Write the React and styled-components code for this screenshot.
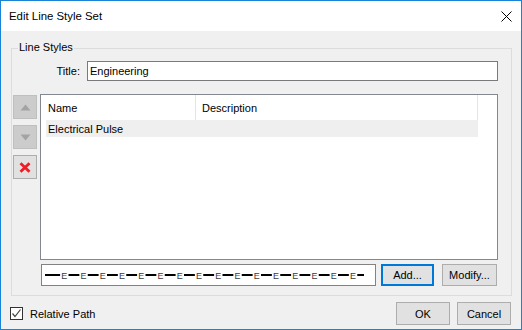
import React from "react";
import styled, { createGlobalStyle, css } from "styled-components";

const Global = createGlobalStyle`
  html, body { margin: 0; padding: 0; background: #ffffff; overflow: hidden; }
  * { box-sizing: border-box; }
  body { font-family: "Liberation Sans", Arial, sans-serif; font-size: 11px; color: #000; }
`;

const Window = styled.div`
  width: 522px;
  height: 330px;
  border: 1px solid #1883d7;
  display: flex;
  flex-direction: column;
  background: #f0f0f0;
`;

const TitleBar = styled.div`
  height: 30px;
  flex: none;
  background: #ffffff;
  display: flex;
  align-items: center;
  justify-content: space-between;
  padding: 0 9px 0 8px;
  font-size: 11.4px;
  color: #000;
`;

const Body = styled.div`
  flex: 1;
  display: flex;
  flex-direction: column;
`;

const Group = styled.div`
  position: relative;
  margin: 17px 9px 0 10px;
  height: 248px;
  border: 1px solid #dcdcdc;
  padding: 12px 13px 9px 1px;
  display: flex;
  flex-direction: column;
`;

const Legend = styled.span`
  position: absolute;
  top: -8px;
  left: 6px;
  padding: 0 1px;
  line-height: 13px;
  background: #f0f0f0;
`;

const TitleRow = styled.div`
  display: flex;
  align-items: center;
  height: 20px;
  gap: 7px;
`;

const Label = styled.label`
  width: 67px;
  text-align: right;
`;

const TextInput = styled.input`
  flex: 1;
  height: 20px;
  border: 1px solid #7a7a7a;
  background: #fff;
  font: inherit;
  padding: 0 2px;
  outline: none;
  color: #000;
`;

const MainRow = styled.div`
  display: flex;
  gap: 3px;
  margin-top: 13px;
  height: 166px;
`;

const SideButtons = styled.div`
  width: 24px;
  padding-top: 1px;
  display: flex;
  flex-direction: column;
  gap: 6px;
`;

const SideButton = styled.div`
  width: 24px;
  height: 24px;
  display: flex;
  align-items: center;
  justify-content: center;
  ${(p) =>
    p.$disabled
      ? css`
          background: #cccccc;
          border: 1px solid #bfbfbf;
        `
      : css`
          background: #e1e1e1;
          border: 1px solid #adadad;
        `}
`;

const List = styled.div`
  flex: 1;
  border: 1px solid #828790;
  background: #fff;
  padding-left: 5px;
`;

const HeaderRow = styled.div`
  display: grid;
  grid-template-columns: 150px 282px;
  height: 25px;
`;

const HeaderCell = styled.div`
  border-right: 1px solid #e5e5e5;
  padding-left: ${(p) => p.$pad}px;
  display: flex;
  align-items: center;
`;

const Row = styled.div`
  width: 432px;
  height: 17px;
  background: #efefef;
  padding-left: 2px;
  display: flex;
  align-items: center;
`;

const BottomRow = styled.div`
  display: flex;
  align-items: center;
  margin-top: 4px;
  height: 22px;
  padding-left: 28px;
`;

const Preview = styled.div`
  width: 335px;
  height: 22px;
  border: 1px solid #828282;
  background: #fff;
  display: flex;
  margin-right: 5px;
`;

const Button = styled.button`
  width: ${(p) => p.$w}px;
  height: ${(p) => p.$h || 22}px;
  margin-right: ${(p) => p.$mr || 0}px;
  padding: 0;
  font: inherit;
  color: #000;
  background: #e1e1e1;
  border: ${(p) => (p.$default ? "2px solid #0078d7" : "1px solid #adadad")};
  display: flex;
  align-items: center;
  justify-content: center;
`;

const Footer = styled.div`
  display: flex;
  align-items: center;
  margin-top: 6px;
  height: 23px;
  padding: 0 10px 0 9px;
`;

const CheckRow = styled.div`
  display: flex;
  align-items: center;
  gap: 7px;
  flex: 1;
`;

const CheckBox = styled.div`
  width: 13px;
  height: 13px;
  border: 1px solid #333;
  background: #fff;
  display: flex;
  align-items: center;
  justify-content: center;
`;

const Buttons = styled.div`
  display: flex;
  gap: 7px;
`;

function LinePreview() {
  const es = Array.from({ length: 16 }, (_, i) => 22.3 + i * 19.25);
  return (
    <svg width="333" height="20" viewBox="0 0 333 20">
      <rect x="3" y="9" width="319" height="2" fill="#000" />
      {es.map((cx, i) => (
        <g key={i}>
          <rect x={cx - 4.2} y="4" width="8.4" height="12" fill="#fff" />
          <text
            x={cx}
            y="13.5"
            textAnchor="middle"
            fontFamily="Liberation Sans, Arial, sans-serif"
            fontSize="9"
            fill="#3c3c3c"
          >
            E
          </text>
        </g>
      ))}
    </svg>
  );
}

export default function App() {
  return (
    <>
      <Global />
      <Window>
        <TitleBar>
          <span>Edit Line Style Set</span>
          <svg width="11" height="11" viewBox="0 0 11 11">
            <path d="M0.5 0.5 L10.5 10.5 M10.5 0.5 L0.5 10.5" stroke="#000" strokeWidth="1" />
          </svg>
        </TitleBar>
        <Body>
          <Group>
            <Legend>Line Styles</Legend>
            <TitleRow>
              <Label>Title:</Label>
              <TextInput defaultValue="Engineering" />
            </TitleRow>
            <MainRow>
              <SideButtons>
                <SideButton $disabled>
                  <svg width="11" height="7" viewBox="0 0 11 7">
                    <path d="M5.5 0.5 L10.5 6.5 L0.5 6.5 Z" fill="#a3a3a3" />
                  </svg>
                </SideButton>
                <SideButton $disabled>
                  <svg width="11" height="7" viewBox="0 0 11 7">
                    <path d="M0.5 0.5 L10.5 0.5 L5.5 6.5 Z" fill="#a3a3a3" />
                  </svg>
                </SideButton>
                <SideButton>
                  <svg width="12" height="11" viewBox="0 0 12 11">
                    <path d="M1.5 1.2 L10.5 9.8 M10.5 1.2 L1.5 9.8" stroke="#ee1c25" strokeWidth="2.8" />
                  </svg>
                </SideButton>
              </SideButtons>
              <List>
                <HeaderRow>
                  <HeaderCell $pad={2}>Name</HeaderCell>
                  <HeaderCell $pad={6}>Description</HeaderCell>
                </HeaderRow>
                <Row>Electrical Pulse</Row>
              </List>
            </MainRow>
            <BottomRow>
              <Preview>
                <LinePreview />
              </Preview>
              <Button $w={53} $mr={8} $default>Add...</Button>
              <Button $w={55}>Modify...</Button>
            </BottomRow>
          </Group>
          <Footer>
            <CheckRow>
              <CheckBox>
                <svg width="11" height="11" viewBox="0 0 11 11">
                  <path d="M1.5 5.5 L4 8.5 L9.5 1.5" stroke="#444" strokeWidth="1.2" fill="none" />
                </svg>
              </CheckBox>
              <span>Relative Path</span>
            </CheckRow>
            <Buttons>
              <Button $w={54} $h={23}>OK</Button>
              <Button $w={54} $h={23}>Cancel</Button>
            </Buttons>
          </Footer>
        </Body>
      </Window>
    </>
  );
}
